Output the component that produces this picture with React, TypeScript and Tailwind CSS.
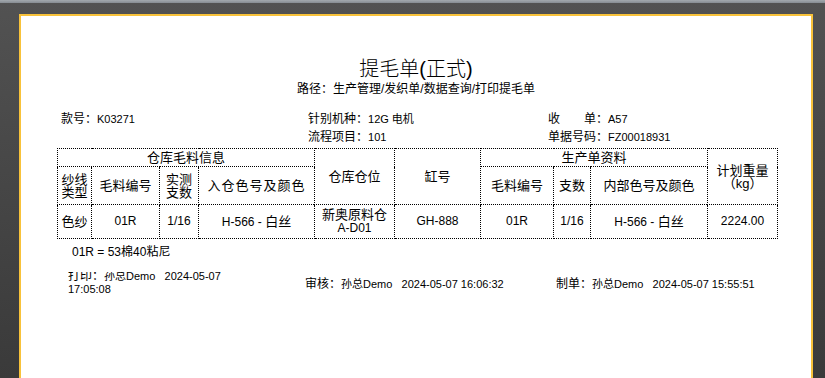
import React from 'react';

const font = "font-['Liberation_Sans','Noto_Sans_CJK_SC',sans-serif]";
const cell = 'border border-dotted border-black text-center align-middle p-0';

function Info({ label, value }: { label: string; value: string }) {
  return (
    <span className="whitespace-nowrap">
      <span className="text-[12px]">{label}</span>
      <span className="text-[11px]">{value}</span>
    </span>
  );
}

function Sign({ label, value }: { label: string; value: string }) {
  return (
    <span className="whitespace-nowrap">
      <span className="text-[12px]">{label}</span>
      <span className="text-[11px]">{value}</span>
    </span>
  );
}

export default function App() {
  return (
    <div className={`h-[378px] w-[825px] overflow-hidden bg-linear-to-b from-[#525252] to-[#3a3a3a] text-black ${font}`}>
      {/* toolbar edge */}
      <div className="h-[3px] bg-linear-to-b from-[#a3a9ae] to-[#868c92]" />

      <div className="pl-[19px] pt-[11px]">
        <div className="w-[794px] h-[400px] border-2 border-[#f8c23a] bg-white">
          {/* heading */}
          <div className="mt-[43px] text-center text-[20px] leading-[20px] font-light">提毛单(正式)</div>
          <div className="mt-[3px] text-center text-[12px] leading-[14px]">
            路径：生产管理/发织单/数据查询/打印提毛单
          </div>

          {/* header info */}
          <div className="mt-[13px] pl-[40px] flex flex-col">
            <div className="flex h-[18px] items-center">
              <div className="w-[247px]"><Info label="款号：" value="K03271" /></div>
              <div className="w-[240px]"><Info label="针别机种：" value="12G 电机" /></div>
              <div><Info label="收　　单：" value="A57" /></div>
            </div>
            <div className="flex h-[18px] items-center">
              <div className="w-[247px]" />
              <div className="w-[240px]"><Info label="流程项目：" value="101" /></div>
              <div><Info label="单据号码：" value="FZ00018931" /></div>
            </div>
          </div>

          {/* table */}
          <table className="mt-[3px] ml-[36px] w-[720px] table-fixed border-collapse text-[13px] leading-[13px]">
            <colgroup>
              <col className="w-[34px]" />
              <col className="w-[68px]" />
              <col className="w-[39px]" />
              <col className="w-[116px]" />
              <col className="w-[80px]" />
              <col className="w-[86px]" />
              <col className="w-[73px]" />
              <col className="w-[37px]" />
              <col className="w-[117px]" />
              <col className="w-[70px]" />
            </colgroup>
            <tbody>
              <tr className="h-[18px]">
                <td className={cell} colSpan={4}>仓库毛料信息</td>
                <td className={cell} rowSpan={2}>仓库仓位</td>
                <td className={cell} rowSpan={2}>缸号</td>
                <td className={cell} colSpan={3}>生产单资料</td>
                <td className={cell} rowSpan={2}>
                  计划重量
                  <br />
                  （kg）
                </td>
              </tr>
              <tr className="h-[38px]">
                <td className={cell}>纱线<br />类型</td>
                <td className={cell}>毛料编号</td>
                <td className={cell}>实测<br />支数</td>
                <td className={`${cell} tracking-[1px]`}>入仓色号及颜色</td>
                <td className={cell}>毛料编号</td>
                <td className={cell}>支数</td>
                <td className={cell}>内部色号及颜色</td>
              </tr>
              <tr className="h-[34px]">
                <td className={cell}>色纱</td>
                <td className={`${cell} text-[12px]`}>01R</td>
                <td className={`${cell} text-[12px]`}>1/16</td>
                <td className={`${cell} text-[12px]`}>H-566 - <span className="text-[13px]">白丝</span></td>
                <td className={cell}>
                  新奥原料仓
                  <br />
                  <span className="text-[12px]">A-D01</span>
                </td>
                <td className={`${cell} text-[12px]`}>GH-888</td>
                <td className={`${cell} text-[12px]`}>01R</td>
                <td className={`${cell} text-[12px]`}>1/16</td>
                <td className={`${cell} text-[12px]`}>H-566 - <span className="text-[13px]">白丝</span></td>
                <td className={`${cell} text-[12px]`}>2224.00</td>
              </tr>
            </tbody>
          </table>

          {/* note */}
          <div className="mt-[6px] ml-[51px] text-[12px] leading-[14px]">01R = 53棉40粘尼</div>

          {/* signatures */}
          <div className="mt-[13px] ml-[47px] flex items-center h-[22px]">
            <div className="w-[237px] h-[22px] overflow-hidden">
              <div className="w-[160px] -mt-[3px] leading-[12px]">
                <Sign label="打印：" value="孙总Demo" />
                <span className="text-[11px]">&nbsp;&nbsp;&nbsp;2024-05-07 17:05:08</span>
              </div>
            </div>
            <div className="w-[251px]">
              <Sign label="审核：" value="孙总Demo" />
              <span className="text-[11px] whitespace-pre">   2024-05-07 16:06:32</span>
            </div>
            <div>
              <Sign label="制单：" value="孙总Demo" />
              <span className="text-[11px] whitespace-pre">   2024-05-07 15:55:51</span>
            </div>
          </div>
        </div>
      </div>
    </div>
  );
}
